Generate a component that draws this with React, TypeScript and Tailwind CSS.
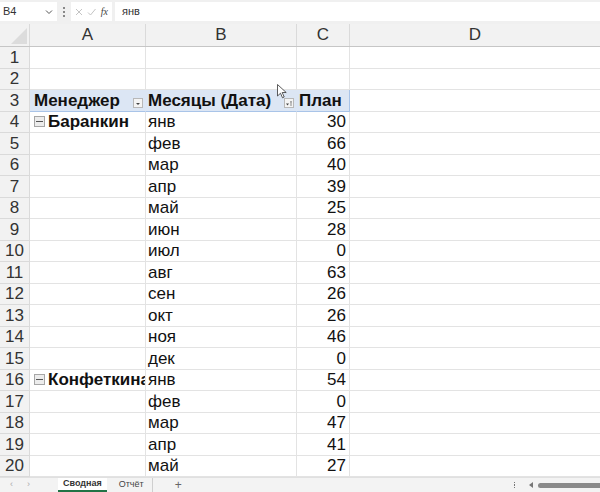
import React from "react";

const months = ["янв", "фев", "мар", "апр", "май", "июн", "июл", "авг", "сен", "окт", "ноя", "дек"];
const plan1 = [30, 66, 40, 39, 25, 28, 0, 63, 26, 26, 46, 0];
const plan2 = [54, 0, 47, 41, 27];

type Row = { a?: string; b?: string; c?: string | number; collapse?: boolean; head?: boolean };

const rows: Row[] = [
  {},
  {},
  { a: "Менеджер", b: "Месяцы (Дата)", c: "План", head: true },
  ...months.map((m, i) => ({ a: i === 0 ? "Баранкин" : undefined, collapse: i === 0, b: m, c: plan1[i] })),
  ...plan2.map((v, i) => ({ a: i === 0 ? "Конфеткина" : undefined, collapse: i === 0, b: months[i], c: v })),
];

function Collapse() {
  return (
    <span className="mr-[3px] inline-flex h-[11px] w-[11px] shrink-0 items-center justify-center border border-[#a6a6a6] bg-[#ececec]">
      <span className="h-px w-[7px] bg-[#555]" />
    </span>
  );
}

function FilterBtn({ filtered }: { filtered?: boolean }) {
  return (
    <span className="absolute bottom-[3px] right-[2px] flex h-[10px] w-[10px] items-center justify-center border border-[#b8b8b8] bg-[#f4f4f4]">
      {filtered ? (
        <svg width="8" height="8" viewBox="0 0 8 8">
          <path d="M1 4.5h3l-1.5 2z" fill="#444" />
          <path d="M5 2.5h2l-0.7 1v3.5h-0.6v-3.5z" fill="#444" />
        </svg>
      ) : (
        <svg width="8" height="8" viewBox="0 0 8 8">
          <path d="M2 4h4l-2 2z" fill="#444" />
        </svg>
      )}
    </span>
  );
}

export default function App() {
  return (
    <div className="relative flex h-[492px] w-[600px] flex-col overflow-hidden bg-white text-[#111]" style={{ fontFamily: '"Liberation Sans", Arial, sans-serif' }}>
      {/* formula bar */}
      <div className="flex h-[24px] items-center gap-[3px] bg-[#f0f0f0] px-0 pt-[2px] pb-[3px]">
        <div className="flex h-[19px] w-[57px] items-center justify-between bg-white pl-[3px] pr-[4px] text-[11px] text-[#333]">
          <span>B4</span>
          <svg width="8" height="6" viewBox="0 0 8 6"><path d="M1 1.5l3 3 3-3" stroke="#555" fill="none" strokeWidth="1" /></svg>
        </div>
        <div className="flex w-[8px] flex-col items-center gap-[2px]">
          <span className="h-[2px] w-[2px] rounded-full bg-[#666]" />
          <span className="h-[2px] w-[2px] rounded-full bg-[#666]" />
          <span className="h-[2px] w-[2px] rounded-full bg-[#666]" />
        </div>
        <div className="flex h-[19px] w-[41px] items-center justify-around bg-white px-[2px]">
          <svg width="8" height="8" viewBox="0 0 8 8"><path d="M1 1l6 6M7 1l-6 6" stroke="#c4c4c4" strokeWidth="1" /></svg>
          <svg width="9" height="8" viewBox="0 0 9 8"><path d="M1 4.5l2.5 2.5 5-6" stroke="#c4c4c4" strokeWidth="1" fill="none" /></svg>
          <span className="text-[10px] italic text-[#444]" style={{ fontFamily: '"Liberation Serif", serif' }}>fx</span>
        </div>
        <div className="flex h-[19px] flex-1 items-center bg-white pl-[7px] text-[11px] text-[#333]">янв</div>
      </div>

      {/* column headers */}
      <div className="flex h-[23px] border-b border-[#c6c6c6] bg-[#f2f2f2] text-[17px] text-[#333]">
        <div className="relative w-[30px] shrink-0 border-r border-[#dadada]">
          <svg className="absolute bottom-[2px] right-[2px]" width="16" height="16" viewBox="0 0 16 16"><path d="M16 0v16H0z" fill="#dcdcdc" /></svg>
        </div>
        <div className="flex w-[116px] shrink-0 items-center justify-center border-r border-[#dadada]">A</div>
        <div className="flex w-[151px] shrink-0 items-center justify-center border-r border-[#dadada]">B</div>
        <div className="flex w-[53px] shrink-0 items-center justify-center border-r border-[#dadada]">C</div>
        <div className="flex flex-1 items-center justify-center">D</div>
      </div>

      {/* grid */}
      <div className="flex-1 overflow-hidden">
        {rows.map((r, i) => (
          <div key={i} className="flex h-[21.5px] text-[17px]">
            <div className="flex w-[30px] shrink-0 items-center justify-center border-b border-r border-[#dadada] bg-[#f2f2f2] text-[#333]">{i + 1}</div>
            <div className={`relative flex w-[116px] shrink-0 items-center overflow-hidden whitespace-nowrap border-b border-r pl-[4px] ${r.head ? "border-[#a9c4e8] border-r-[#dce6f4] bg-[#dce6f4] font-bold" : "border-[#e3e3e3]"} ${r.collapse ? "font-bold" : ""}`}>
              {r.collapse && <Collapse />}
              {r.a}
              {r.head && <FilterBtn />}
            </div>
            <div className={`relative flex w-[151px] shrink-0 items-center overflow-hidden whitespace-nowrap border-b border-r pl-[2px] ${r.head ? "border-[#a9c4e8] border-r-[#dce6f4] bg-[#dce6f4] font-bold" : "border-[#e3e3e3]"}`}>
              {r.b}
              {r.head && <FilterBtn filtered />}
            </div>
            <div className={`flex w-[53px] shrink-0 items-center whitespace-nowrap border-b border-r ${r.head ? "border-[#a9c4e8] bg-[#dce6f4] pl-[2px] font-bold" : "justify-end border-[#e3e3e3] pr-[3px]"}`}>
              {r.c}
            </div>
            <div className="flex-1 border-b border-[#e3e3e3]" />
          </div>
        ))}
      </div>

      {/* mouse cursor */}
      <svg className="absolute left-[277px] top-[84px]" width="10" height="15" viewBox="0 0 10 15">
        <path d="M0.5 0.5v11.5l3-2.8 2 4.6 1.7-0.8-2-4.5h4z" fill="white" stroke="#333" strokeWidth="0.8" />
      </svg>

      {/* sheet tabs */}
      <div className="flex h-[15px] items-center border-t border-[#e0e0e0] bg-[#f3f3f3] text-[9px] text-[#333]">
        <span className="ml-[10px] text-[#aaa]">‹</span>
        <span className="ml-[14px] text-[#aaa]">›</span>
        <div className="ml-[28px] flex h-full items-center border-b-2 border-[#217346] bg-white px-[5px] font-bold">Сводная</div>
        <div className="ml-[4px] flex h-full items-center border-r border-[#cfcfcf] px-[8px] text-[#444]">Отчёт</div>
        <span className="ml-[22px] text-[12px] text-[#666]">+</span>
        <div className="flex-1" />
        <div className="mr-[14px] flex flex-col items-center gap-[1px]">
          <span className="h-[1.5px] w-[1.5px] bg-[#777]" />
          <span className="h-[1.5px] w-[1.5px] bg-[#777]" />
          <span className="h-[1.5px] w-[1.5px] bg-[#777]" />
        </div>
        <svg width="5" height="6" viewBox="0 0 5 6"><path d="M4 0v6L0 3z" fill="#777" /></svg>
        <div className="ml-[4px] h-[5px] w-[62px] rounded-l-full bg-[#8a8a8a]" />
      </div>
    </div>
  );
}
